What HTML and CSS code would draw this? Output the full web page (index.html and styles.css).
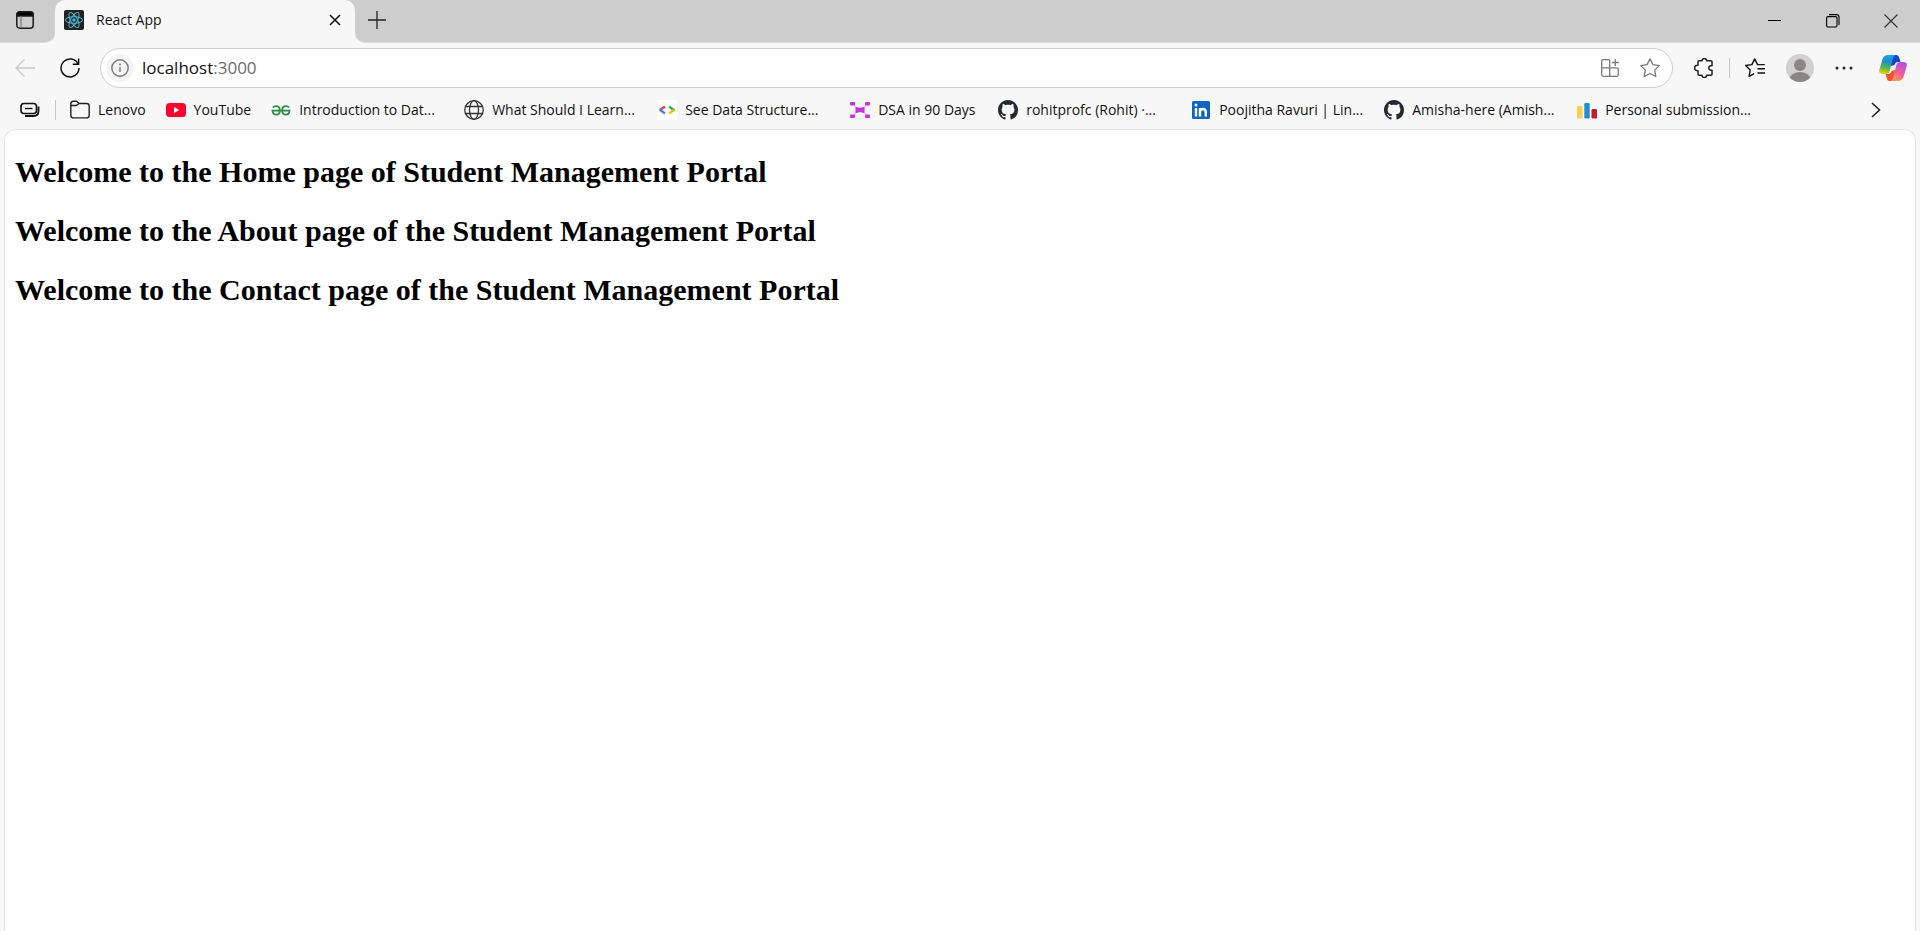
FILE: index.html
```
<!DOCTYPE html>
<html lang="en">
<head>
<meta charset="utf-8">
<title>React App</title>
<link rel="stylesheet" href="styles.css">
</head>
<body>
<svg class="symbols" aria-hidden="true">
  <symbol id="github" viewBox="0 0 16 16"><path fill="#24292f" d="M8 0C3.58 0 0 3.58 0 8c0 3.54 2.29 6.53 5.47 7.59.4.07.55-.17.55-.38 0-.19-.01-.82-.01-1.49-2.01.37-2.53-.49-2.69-.94-.09-.23-.48-.94-.82-1.13-.28-.15-.68-.52-.01-.53.63-.01 1.08.58 1.23.82.72 1.21 1.87.87 2.33.66.07-.52.28-.87.51-1.07-1.78-.2-3.64-.89-3.64-3.95 0-.87.31-1.59.82-2.15-.08-.2-.36-1.02.08-2.12 0 0 .67-.21 2.2.82.64-.18 1.32-.27 2-.27s1.36.09 2 .27c1.53-1.04 2.2-.82 2.2-.82.44 1.1.16 1.92.08 2.12.51.56.82 1.27.82 2.15 0 3.07-1.87 3.75-3.65 3.95.29.25.54.73.54 1.48 0 1.07-.01 1.93-.01 2.2 0 .21.15.46.55.38A8.01 8.01 0 0 0 16 8c0-4.42-3.58-8-8-8z"/></symbol>
</svg>
<div class="browser">
  <header class="tab-strip">
    <div class="strip-start">
      <button class="icon-button" aria-label="Tab actions">
        <svg width="20" height="20" viewBox="0 0 20 20" fill="none" stroke="#1b1b1b" stroke-width="1.5"><rect x="1.8" y="1.8" width="16.4" height="16.4" rx="3"/><path d="M2 6V4.500Q2 2 4.500 2h11Q18 2 18 4.500V6z" fill="#000"/><path d="M6 6v12" stroke="#777" stroke-width="1.2"/></svg>
      </button>
    </div>
    <div class="tab-well">
      <div class="tab">
        <svg width="20" height="20" viewBox="0 0 20 20" fill="none" stroke="#53b9d4" stroke-width="1"><rect width="20" height="20" rx="2" fill="#222" stroke="none"/><ellipse cx="10" cy="10" rx="8.500" ry="3.300"/><ellipse cx="10" cy="10" rx="8.500" ry="3.300" transform="rotate(60 10 10)"/><ellipse cx="10" cy="10" rx="8.500" ry="3.300" transform="rotate(120 10 10)"/><circle cx="10" cy="10" r="1.700" fill="#53b9d4" stroke="none"/></svg>
        <span class="tab-title">React App</span>
        <button class="icon-button" aria-label="Close tab">
          <svg width="12" height="12" viewBox="0 0 12 12" stroke="#111" stroke-width="1.500"><path d="M1 1l10 10M11 1L1 11"/></svg>
        </button>
      </div>
    </div>
    <div class="strip-rest">
      <button class="icon-button" aria-label="New tab">
        <svg width="18" height="18" viewBox="0 0 18 18" stroke="#222" stroke-width="1.300"><path d="M9 0v18M0 9h18"/></svg>
      </button>
      <div class="window-controls">
        <button class="icon-button" aria-label="Minimize"><svg width="14" height="14" viewBox="0 0 14 14" stroke="#000"><path d="M0 6.500h13"/></svg></button>
        <button class="icon-button" aria-label="Restore"><svg width="14" height="14" viewBox="0 0 14 14" fill="none" stroke="#000" stroke-width="1.100"><rect x=".6" y="2.600" width="10.400" height="10.400" rx="1.500"/><path d="M3 .6h7.500q2.500 0 2.500 2.500V11"/></svg></button>
        <button class="icon-button" aria-label="Close"><svg width="14" height="14" viewBox="0 0 14 14" stroke="#333" stroke-width="1.200"><path d="M.5.5l13 13M13.500.5l-13 13"/></svg></button>
      </div>
    </div>
  </header>

  <div class="toolbar">
    <div class="nav-buttons">
      <button class="icon-button" aria-label="Back" disabled><svg width="20" height="20" viewBox="0 0 20 20" fill="none" stroke="#c9c9c9" stroke-width="1.300"><path d="M20 10H1M9.500 1.500L1 10l8.500 8.500"/></svg></button>
      <button class="icon-button" aria-label="Refresh"><svg width="20" height="20" viewBox="0 0 20 20" fill="none" stroke="#111" stroke-width="1.500"><path d="M18.200 6.200A9 9 0 1 0 19 10M18.600.5v5.800h-5.800"/></svg></button>
    </div>
    <div class="address-bar">
      <button class="site-info" aria-label="Site information"><svg width="18" height="18" viewBox="0 0 18 18" fill="none" stroke="#777" stroke-width="1.400"><circle cx="9" cy="9" r="8.200"/><path d="M9 8v5"/><circle cx="9" cy="5.500" r=".9" fill="#777" stroke="none"/></svg></button>
      <div class="url" role="textbox" contenteditable="true" spellcheck="false" aria-label="Address">localhost<span class="port">:3000</span></div>
      <div class="address-actions">
        <button class="icon-button" aria-label="Apps"><svg width="18" height="18" viewBox="0 0 18 18" fill="none" stroke="#777" stroke-width="1.300"><path d="M8.700 8.800V2.200Q8.700.7 7.200.7h-5Q.7.7.7 2.200v13.600q0 1.500 1.500 1.500h13.600q1.500 0 1.500-1.500v-5.500q0-1.500-1.500-1.500H.7M8.700 8.800v8.500M14.300 0v7M10.800 3.500h7"/></svg></button>
        <button class="icon-button" aria-label="Add to favorites"><svg width="20" height="20" viewBox="0 0 20 20" fill="none" stroke="#777" stroke-width="1.300" stroke-linejoin="round"><path d="M10 .8l2.900 5.800 6.400 1-4.600 4.500 1.100 6.400L10 15.500l-5.800 3 1.100-6.400L.7 7.600l6.400-1z"/></svg></button>
      </div>
    </div>
    <div class="toolbar-actions">
      <button class="icon-button" aria-label="Extensions"><svg width="20" height="20" viewBox="0 0 20 20" fill="none" stroke="#222" stroke-width="1.500" stroke-linejoin="round"><path d="M5 2.800h3a2.300 2.300 0 0 1 4.600 0H17q1 0 1 1v4h-1a2.200 2.200 0 0 0 0 4.400h1v4q0 1-1 1h-4.400a2.300 2.300 0 0 1-4.600 0H5q-1 0-1-1v-3.500H3.300a2.600 2.600 0 0 1 0-5.400H4V3.800q0-1 1-1z"/></svg></button>
      <span class="divider"></span>
      <button class="icon-button" aria-label="Favorites"><svg width="20" height="20" viewBox="0 0 20 20" fill="none" stroke="#111" stroke-width="1.400" stroke-linejoin="round"><path d="M19.800 6.600h-7.300L9.700.9 6.900 6.600l-6.300.9 4.600 4.500-1.100 6.300 5.100-2.600M12.500 10.800H20M12.500 15H20"/></svg></button>
      <button class="icon-button" aria-label="Profile"><svg width="28" height="28" viewBox="0 0 28 28"><clipPath id="disc"><circle cx="14" cy="14" r="14"/></clipPath><circle cx="14" cy="14" r="14" fill="#d2d0ce"/><g fill="#8a8886" clip-path="url(#disc)"><circle cx="14" cy="11" r="6"/><ellipse cx="14" cy="25.500" rx="10.500" ry="7.500"/></g></svg></button>
      <button class="icon-button" aria-label="Settings and more"><svg width="18" height="18" viewBox="0 0 18 18" fill="#222"><circle cx="2" cy="9" r="1.500"/><circle cx="9" cy="9" r="1.500"/><circle cx="16" cy="9" r="1.500"/></svg></button>
      <button class="icon-button" aria-label="Copilot"><svg width="28" height="28" viewBox="0 0 28 28">
        <defs>
          <linearGradient id="cool" x1=".5" y1="0" x2=".3" y2="1"><stop offset="0" stop-color="#18a0f2"/><stop offset=".35" stop-color="#1d8fc4"/><stop offset=".65" stop-color="#52b55a"/><stop offset="1" stop-color="#f5d000"/></linearGradient>
          <linearGradient id="warm" x1=".7" y1="0" x2=".3" y2="1"><stop offset="0" stop-color="#a653ee"/><stop offset=".5" stop-color="#ee5aa0"/><stop offset="1" stop-color="#ff9a52"/></linearGradient>
        </defs>
        <path fill="#1a45c4" d="M12 1h5.500q2 0 2.700 2.500L21.500 8H19q-2.500 0-3.500 3l-3.500 1z"/>
        <path fill="#f2542d" d="M16 27h-5.500q-2 0-2.700-2.500L6.500 20H9q2.500 0 3.500-3l3.500-1z"/>
        <path fill="url(#cool)" d="M9 1h7.500q-2 1-2.800 4L11 16q-1 4-4.500 4H4Q-.5 20 .3 16L3.500 5Q5 1 9 1z"/>
        <path fill="url(#warm)" d="M19 27h-7.500q2-1 2.800-4L17 12q1-4 4.500-4H24q4.500 0 3.700 4l-3.200 11q-1.500 4-5.500 4z"/>
      </svg></button>
    </div>
  </div>

  <nav class="bookmarks" aria-label="Favorites bar">
    <button class="icon-button" aria-label="Browser essentials"><svg width="20" height="16" viewBox="0 0 20 16" fill="none" stroke="#111"><path d="M18.500 4.500v4.500q0 5-5 5H5" stroke-width="1.800"/><rect x="1" y="1.500" width="15.500" height="10" rx="3" stroke-width="1.600" fill="#f7f7f7"/><path d="M5 6.500h7.500" stroke-width="1.400"/></svg></button>
    <span class="divider"></span>
    <div class="links">
      <a class="bookmark" href="#"><svg width="20" height="20" viewBox="0 0 20 20" fill="none" stroke="#222" stroke-width="1.400"><path d="M.8 4Q.8 1.300 3.500 1.300h3L9.200 3.500h7.300q2.700 0 2.700 2.700v9q0 2.700-2.700 2.700h-13Q.8 17.900.8 15.200zM.8 5.500h5.500L9.200 3.500"/></svg><span>Lenovo</span></a>
      <a class="bookmark" href="#"><svg width="20" height="20" viewBox="0 0 20 20"><rect y="3" width="20" height="14" rx="3.500" fill="#ff0033"/><path d="M8 7v6l5.200-3z" fill="#fff"/></svg><span>YouTube</span></a>
      <a class="bookmark long" href="#"><svg width="20" height="20" viewBox="0 0 20 20" fill="none" stroke="#2f8d46" stroke-width="1.800"><path d="M1.800 7.500Q3 6.200 5 6.200q3.800 0 3.800 4.200 0 4.200-3.500 4.200T1.500 10.600h17q-.3 4-3.800 4t-3.500-4.200q0-4.200 3.800-4.200 2 0 3.200 1.300"/></svg><span>Introduction to Dat...</span></a>
      <a class="bookmark long" href="#"><svg width="20" height="20" viewBox="0 0 20 20" fill="none" stroke="#333" stroke-width="1.300"><circle cx="10" cy="10" r="9.300"/><ellipse cx="10" cy="10" rx="4.500" ry="9.300"/><path d="M1.500 6.500h17M1.500 13.500h17"/></svg><span>What Should I Learn...</span></a>
      <a class="bookmark long" href="#"><svg width="20" height="20" viewBox="0 0 20 20" fill="none" stroke-width="2.400"><rect width="20" height="20" rx="1" fill="#fff"/><path d="M8 6.500L3 10" stroke="#ea4335"/><path d="M2.500 9.500L8 13.500" stroke="#4285f4"/><path d="M12 6.500l5.500 4" stroke="#34a853"/><path d="M17 10l-5 3.500" stroke="#fbbc04"/></svg><span>See Data Structure...</span></a>
      <a class="bookmark medium" href="#"><svg width="20" height="20" viewBox="0 0 20 20" fill="#c832dc"><path d="M3 4l4 5M17 4l-4 5M3 16l4-5M17 16l-4-5" stroke="#e3a6ec" stroke-width="1.200"/><rect y="2" width="5" height="3.500" rx="1"/><rect x="15" y="2" width="5" height="3.500" rx="1"/><rect y="14.500" width="5" height="3.500" rx="1"/><rect x="15" y="14.500" width="5" height="3.500" rx="1"/><path d="M5.500 8q0-1 1-1L10 8l3.500-1q1 0 1 1v4q0 1-1 1L10 12l-3.500 1q-1 0-1-1z"/></svg><span>DSA in 90 Days</span></a>
      <a class="bookmark long" href="#"><svg width="20" height="20"><use href="#github"/></svg><span>rohitprofc (Rohit) ·...</span></a>
      <a class="bookmark long" href="#"><svg width="20" height="20" viewBox="0 0 20 20"><rect x="1" y="1" width="18" height="18" rx="1.500" fill="#0a66c2"/><g stroke="#fff" stroke-width="2.400" fill="none"><path d="M5 8v8.500M9 16.500V8M9 12q0-3 3-3 2.800 0 2.800 3.300v4.200"/></g><circle cx="5" cy="5" r="1.500" fill="#fff"/></svg><span>Poojitha Ravuri | Lin...</span></a>
      <a class="bookmark long" href="#"><svg width="20" height="20"><use href="#github"/></svg><span>Amisha-here (Amish...</span></a>
      <a class="bookmark long" href="#"><svg width="20" height="20" viewBox="0 0 20 20"><rect y="6" width="5.500" height="12.500" rx="1.200" fill="#f9d154"/><rect x="7.300" y="3" width="5.400" height="15.500" rx="1.200" fill="#1f8dd6"/><rect x="14.500" y="9" width="5.500" height="9.500" rx="1.200" fill="#bd1f2d"/></svg><span>Personal submission...</span></a>
    </div>
    <button class="icon-button" aria-label="More favorites"><svg width="10" height="16" viewBox="0 0 10 16" fill="none" stroke="#222" stroke-width="1.600"><path d="M1 1l7.500 7L1 15"/></svg></button>
  </nav>

  <main class="page">
    <h1>Welcome to the Home page of Student Management Portal</h1>
    <h1>Welcome to the About page of the Student Management Portal</h1>
    <h1>Welcome to the Contact page of the Student Management Portal</h1>
  </main>
</div>
</body>
</html>
```

FILE: styles.css
```
* {
  box-sizing: border-box;
}

body {
  margin: 0;
  background: #f7f7f7;
  color: #111;
  font: 14px/20px "Open Sans", "Noto Sans", sans-serif;
}

svg {
  display: block;
  flex: none;
}

.symbols {
  display: none;
}

.browser {
  min-height: 100vh;
  display: flex;
  flex-direction: column;
}

.icon-button,
.site-info {
  display: flex;
  align-items: center;
  justify-content: center;
  padding: 0;
  border: 0;
  background: none;
}

/* Tab strip */
.tab-strip {
  display: flex;
  height: 43px;
}

.strip-start,
.strip-rest {
  display: flex;
  align-items: center;
  background: #cdcdcd;
  border-bottom: 1px solid #dcdcdc;
}

.strip-start {
  width: 55px;
  padding: 0 0 2px 15px;
  border-bottom-right-radius: 10px;
}

.tab-well {
  width: 300px;
  background: linear-gradient(#cdcdcd 50%, #f7f7f7 50%);
}

.tab {
  height: 100%;
  display: flex;
  align-items: center;
  gap: 12px;
  padding: 0 14px 3px 9px;
  background: #f7f7f7;
  border-radius: 10px 10px 0 0;
}

.tab-title {
  flex: 1;
}

.strip-rest {
  flex: 1;
  justify-content: space-between;
  padding: 0 22px 0 13px;
  border-bottom-left-radius: 10px;
}

.strip-rest > .icon-button {
  padding-bottom: 3px;
}

.window-controls {
  display: flex;
  gap: 44px;
}

/* Toolbar */
.toolbar {
  display: flex;
  align-items: center;
  padding: 5px 13px 5px 15px;
}

.nav-buttons {
  display: flex;
  gap: 25px;
  padding-right: 20px;
}

.address-bar {
  flex: 1;
  height: 40px;
  display: flex;
  align-items: center;
  padding: 0 12px 0 5px;
  border: 1px solid #cfcfcf;
  border-radius: 20px;
  background: #fff;
}

.site-info {
  width: 28px;
  height: 28px;
  border-radius: 50%;
  background: #f3f3f3;
}

.url {
  flex: 1;
  padding-left: 8px;
  font-size: 17px;
  line-height: 24px;
  outline: 0;
}

.port {
  color: #6b6b6b;
}

.address-actions {
  display: flex;
  gap: 21px;
}

.toolbar-actions {
  display: flex;
  align-items: center;
  padding-left: 21px;
}

.toolbar-actions .divider {
  margin: 0 15px;
}

.toolbar-actions .icon-button + .icon-button {
  margin-left: 21px;
}

.toolbar-actions .icon-button:last-child {
  margin-left: 26px;
}

.divider {
  width: 1px;
  height: 20px;
  background: #c8c8c8;
}

/* Favorites bar */
.bookmarks {
  display: flex;
  align-items: center;
  padding: 7px 39px 9px 20px;
  gap: 14px;
}

.bookmarks .divider {
  margin-left: 1px;
}

.links {
  flex: 1;
  display: flex;
  min-width: 0;
}

.bookmark {
  display: flex;
  align-items: center;
  gap: 8px;
  padding-right: 20px;
  color: inherit;
  text-decoration: none;
  white-space: nowrap;
}

.medium {
  width: 148px;
}

.long {
  width: 193px;
}

/* Page */
.page {
  flex: 1;
  margin: 0 4px;
  padding: 25px 10px;
  background: #fff;
  border: 1px solid #e6e6e6;
  border-bottom: 0;
  border-radius: 12px 12px 0 0;
}

.page h1 {
  margin: 0 0 25px;
  color: #000;
  font: bold 30px/34px "Liberation Serif", serif;
}
```
